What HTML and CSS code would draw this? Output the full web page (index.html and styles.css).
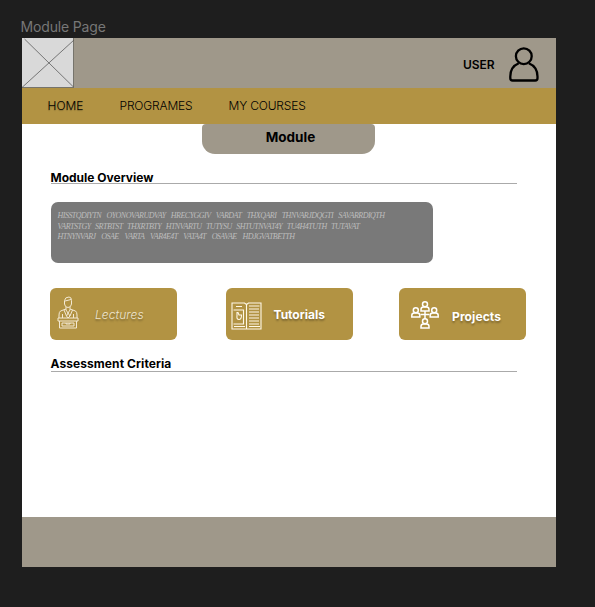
FILE: index.html
```html
<!DOCTYPE html>
<html lang="en">
<head>
<meta charset="utf-8">
<title>Module Page</title>
<link rel="stylesheet" href="styles.css">
</head>
<body>
<div class="frame-label">Module Page</div>
<div class="frame">
  <header class="header">
    <svg class="logo" viewBox="0 0 52 50"><rect x="0" y="0" width="52" height="50" fill="#d9d9d9"/><path d="M2.500 1L52 49.500M0 49.500L52 2" stroke="#4a4a4a" stroke-width=".7" fill="none"/><path d="M0 49.600H51.600V0" stroke="#5f5c54" stroke-width=".9" fill="none"/></svg>
    <div class="user">
      <span class="user-name">USER</span>
      <svg class="user-icon" viewBox="0 0 30 35" fill="none" stroke="#000" stroke-width="2.300"><circle cx="14.800" cy="9.200" r="7.900"/><path d="M9.800 16.200C4 18.500 1.300 23.500 1.300 29.500V31.200Q1.300 33.500 3.600 33.500H26.200Q28.500 33.500 28.500 31.200V29.500C28.500 23.500 25.500 18.500 19.800 16.200"/></svg>
    </div>
  </header>
  <nav class="nav">
    <a class="home">HOME</a>
    <a class="programes">PROGRAMES</a>
    <a class="courses">MY COURSES</a>
  </nav>
  <main class="content">
    <h1 class="tab">Module</h1>
    <h2 class="heading">Module Overview</h2>
    <div class="overview">
      <p class="line first">HISSTQDIYTN OYONOVARUDVAY HRECYGGIV VARDAT THXQARI THNVARJDQGTI SAVARRDIQTH</p>
      <p class="line second">VARTSTGY SRTBTST THXRTBTY HTNVARTU TUTYSU SHTUTNVAT4Y TU4H4TUTH TUTAVAT</p>
      <p class="line third">HTNYNVARJ OSAE VARTA VAR4E4T VATA4T OSAVAE HDJGVATBETTH</p>
    </div>
    <div class="cards">
      <a class="card lectures">
        <svg class="card-icon" viewBox="0 0 22 33" fill="none" stroke="#f3e9d3" stroke-width="1"><path d="M7.500 4.500Q8 1 12 1Q14.500 1 14.500 4.500V8Q14 11.500 11 11.500Q8 11.500 7.500 8ZM8 5L14 3.500M9 11V14L11 17L13 14V11M9 13L3.500 15Q2 16 2 19V22M13 13L18.500 15Q20 16 20 19V22M7 14L9.500 20L11 17L13 20L15.500 14M5.500 18V22M16.500 18V22M9.500 20L11 22L13 20"/><path d="M1 22H21V25H1ZM2.500 25V32H19.500V25M5 27H17V30H5ZM9 27V28H13V27"/></svg>
        <span class="card-title">Lectures</span>
      </a>
      <a class="card tutorials">
        <svg class="card-icon" viewBox="0 0 31 28" fill="none" stroke="#fff8e7" stroke-width="1.100"><path d="M1 1H13.500L15.500 2.500L17.500 1H30V27H1ZM15.500 2.500V27M3 24.500H14M5 4.500H11"/><path d="M2.500 8H12.500V22H2.500"/><path d="M6 10.500V14Q5.500 17.500 8 17.500Q10.500 17.500 10.500 13H8L7 10.500ZM18 4H28.500M18 7H28M18 10H28M18 13H28M18 16H28M18 19H28M18 22H28M18 24.500H29"/></svg>
        <span class="card-title">Tutorials</span>
      </a>
      <a class="card projects">
        <svg class="card-icon" viewBox="0 0 28 28" fill="none" stroke="#fff" stroke-width="1.500"><path d="M9.500 13.500H18.500M14 10V18"/><g id="p"><circle cx="14" cy="3.300" r="2.500"/><path d="M10 10V8.500Q10 6 12.500 6H15.500Q18 6 18 8.500V10Z"/></g><use href="#p" x="-9.200" y="6"/><use href="#p" x="9.200" y="6"/><use href="#p" y="17"/></svg>
        <span class="card-title">Projects</span>
      </a>
    </div>
    <h2 class="heading criteria">Assessment Criteria</h2>
  </main>
  <footer class="footer"></footer>
</div>
</body>
</html>
```
FILE: styles.css
```css
* { box-sizing: border-box; }
body {
  margin: 0;
  height: 607px;
  padding: 18px 39.500px 0 21.500px;
  overflow: hidden;
  background: #1e1e1e;
  color: #000;
  font-family: Inter, "Liberation Sans", sans-serif;
}
.frame-label {
  height: 20px;
  line-height: 18px;
  font-size: 14px;
  letter-spacing: -.15px;
  color: #777;
  margin-left: -1px;
  white-space: nowrap;
}
.frame {
  height: 529px;
  display: flex;
  flex-direction: column;
  background: #fff;
}
.header {
  height: 50px;
  flex: none;
  display: flex;
  justify-content: space-between;
  background: #9f988a;
}
.logo { width: 52px; height: 50px; }
.user { display: flex; align-items: center; padding: 2px 17px 0 0; }
.user-name { font-size: 12px; font-weight: 600; margin-right: 14px; letter-spacing: -.05px; }
.user-icon { width: 30px; height: 35px; }
.nav {
  height: 35.500px;
  flex: none;
  display: flex;
  align-items: center;
  padding-left: 26px;
  background: #b29343;
  font-size: 12px;
  font-weight: 300;
  white-space: nowrap;
}
.home { width: 72px; text-shadow: 0 1px 1px rgba(0,0,0,.25); }
.programes { width: 109px; letter-spacing: -.15px; }
.courses { letter-spacing: -.17px; }
.content { flex: 1; display: flex; flex-direction: column; }
.tab {
  width: 173px;
  height: 30.500px;
  flex: none;
  margin: 0 0 16px 180px;
  padding-left: 5px;
  border-radius: 4px 4px 13px 13px;
  background: #9f988a;
  font-size: 13.500px;
  font-weight: 700;
  line-height: 27px;
  text-align: center;
}
.heading {
  width: 466px;
  height: 14px;
  flex: none;
  margin: 0 0 18px 29px;
  border-bottom: 1px solid #aaa;
  font-size: 12px;
  font-weight: 700;
  line-height: 16px;
  white-space: nowrap;
}
.overview {
  width: 382.500px;
  height: 61px;
  flex: none;
  margin-left: 29px;
  padding: 9px 7px;
  border-radius: 7px;
  background: #797979;
  color: #bdbdbd;
  font: italic 8px/10.500px "Liberation Serif", serif;
}
.line { margin: 0; white-space: nowrap; text-align-last: justify; }
.first { width: 327px; letter-spacing: -.52px; }
.second { width: 302px; letter-spacing: -.5px; }
.third { width: 237px; letter-spacing: -.55px; }
.cards { display: flex; margin: 25px 0 0 28.500px; }
.card {
  width: 127px;
  height: 52px;
  display: flex;
  align-items: center;
  border-radius: 6px;
  background: #b29343;
  color: #fff;
  font-size: 12px;
  font-weight: 700;
  text-shadow: 0 2px 2px rgba(0,0,0,.3);
}
.lectures { padding-left: 7px; font-weight: 300; font-style: italic; color: #eee5d0; }
.lectures .card-icon { width: 22px; height: 33px; margin: -3px 16px 0 0; }
.lectures .card-title { letter-spacing: .08px; }
.tutorials { margin-left: 49px; padding-left: 5px; }
.tutorials .card-icon { width: 31px; height: 28px; margin: 3px 11.500px 0 0; }
.projects { margin-left: 46px; padding-left: 12px; }
.projects .card-icon { width: 28px; height: 28px; margin: 2px 13px 0 0; }
.projects .card-title { padding-top: 4px; letter-spacing: .1px; }
.criteria { margin-top: 18px; line-height: 12px; letter-spacing: .08px; }
.footer { height: 50.500px; flex: none; background: #9f988a; }
```
